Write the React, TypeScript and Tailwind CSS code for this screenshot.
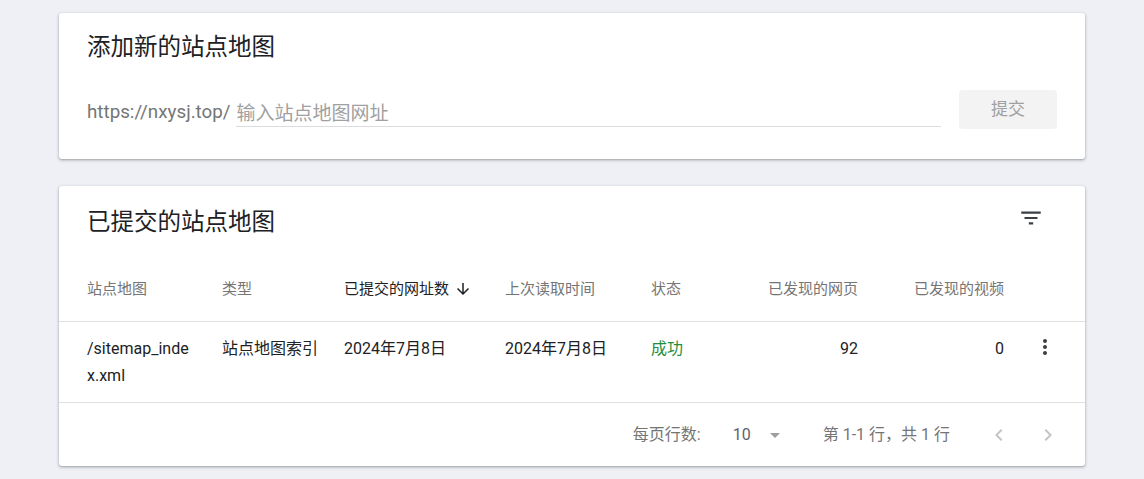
import React from 'react';

const font = { fontFamily: 'Roboto, "Noto Sans CJK SC", sans-serif' };

// Material-style icons drawn inline
const FilterIcon = () => (
  <svg viewBox="0 0 24 24" className="w-[26px] h-[26px] fill-[#3c4043]">
    <path d="M10 18h4v-2h-4v2zM3 6v2h18V6H3zm3 7h12v-2H6v2z" />
  </svg>
);

const ArrowDown = () => (
  <svg viewBox="0 0 24 24" className="w-[18px] h-[18px] fill-[#202124]">
    <path d="M20 12l-1.41-1.41L13 16.17V4h-2v12.17l-5.58-5.59L4 12l8 8 8-8z" />
  </svg>
);

const MoreVert = () => (
  <svg viewBox="0 0 24 24" className="w-[24px] h-[24px] fill-[#3c4043]">
    <path d="M12 8c1.1 0 2-.9 2-2s-.9-2-2-2-2 .9-2 2 .9 2 2 2zm0 2c-1.1 0-2 .9-2 2s.9 2 2 2 2-.9 2-2-.9-2-2-2zm0 6c-1.1 0-2 .9-2 2s.9 2 2 2 2-.9 2-2-.9-2-2-2z" />
  </svg>
);

const DropDown = () => (
  <svg viewBox="0 0 24 24" className="w-[24px] h-[24px] fill-[#9e9e9e]">
    <path d="M7 10l5 5 5-5z" />
  </svg>
);

const ChevronLeft = () => (
  <svg viewBox="0 0 24 24" className="w-[24px] h-[24px] fill-[#c4c4c4]">
    <path d="M15.41 7.41L14 6l-6 6 6 6 1.41-1.41L10.83 12z" />
  </svg>
);

const ChevronRight = () => (
  <svg viewBox="0 0 24 24" className="w-[24px] h-[24px] fill-[#c4c4c4]">
    <path d="M10 6L8.59 7.41 13.17 12l-4.58 4.59L10 18l6-6z" />
  </svg>
);

const cardClass =
  'bg-white rounded-[3px] shadow-[0_1px_2px_rgba(60,64,67,0.3),0_1px_3px_1px_rgba(60,64,67,0.15)]';

const cols = 'grid grid-cols-[135px_122px_161px_146px_107px_100px_146px_1fr] pl-[28px]';

function AddSitemap() {
  return (
    <div className={`${cardClass} h-[146px] pt-[18px] px-[28px]`}>
      <h2 className="text-[23.5px] leading-[32px] text-[#202124] font-normal">添加新的站点地图</h2>
      <div className="flex items-end h-[39px] mt-[27px]">
        <span className="text-[18.8px] leading-[24px] text-[#757575] mb-[5px]">https://nxysj.top/</span>
        <div className="flex-1 ml-[5px] mb-[2px] h-[25px] border-b border-[#dadce0]">
          <input
            className="w-full h-[24px] bg-transparent outline-none text-[19px] leading-[24px] text-[#202124] placeholder:text-[#a0a0a0] pl-[1px]"
            placeholder="输入站点地图网址"
          />
        </div>
        <button className="ml-[18px] w-[98px] h-[39px] rounded-[4px] bg-[#f3f3f3] text-[17px] text-[#a0a0a0]">
          提交
        </button>
      </div>
    </div>
  );
}

function SitemapTable() {
  return (
    <div className={`${cardClass} h-[280px] pt-[20px]`}>
      <div className="flex items-center justify-between h-[32px] pl-[28px] pr-[30px]">
        <h2 className="text-[23.5px] leading-[32px] text-[#202124] font-normal">已提交的站点地图</h2>
        <button className="w-[48px] h-[48px] -mt-[8px] flex items-center justify-center">
          <FilterIcon />
        </button>
      </div>

      {/* header */}
      <div className={`${cols} mt-[19px] h-[65px] items-center border-b border-[#e0e0e0] text-[15px] text-[#757575]`}>
        <div>站点地图</div>
        <div>类型</div>
        <div className="flex items-center gap-[5px] text-[#202124]">
          已提交的网址数
          <ArrowDown />
        </div>
        <div>上次读取时间</div>
        <div>状态</div>
        <div className="text-right">已发现的网页</div>
        <div className="text-right">已发现的视频</div>
        <div />
      </div>

      {/* row */}
      <div className={`${cols} h-[81px] pt-[13px] border-b border-[#e0e0e0] text-[16px] leading-[27px] text-[#202124] items-start`}>
        <div className="pr-[30px] break-all">/sitemap_index.xml</div>
        <div>站点地图索引</div>
        <div>2024年7月8日</div>
        <div>2024年7月8日</div>
        <div className="text-[#1e8e3e]">成功</div>
        <div className="text-right">92</div>
        <div className="text-right">0</div>
        <div className="flex justify-center">
          <MoreVert />
        </div>
      </div>

      {/* pagination */}
      <div className="flex items-center justify-end h-[63px] pr-[13px] text-[16px] text-[#757575]">
        <span>每页行数:</span>
        <span className="ml-[32px] text-[#5f6368]">10</span>
        <span className="ml-[12px]">
          <DropDown />
        </span>
        <span className="ml-[36px]">第 1-1 行，共 1 行</span>
        <button className="ml-[25px] w-[48px] h-[48px] flex items-center justify-center">
          <ChevronLeft />
        </button>
        <button className="ml-[1px] w-[48px] h-[48px] flex items-center justify-center">
          <ChevronRight />
        </button>
      </div>
    </div>
  );
}

export default function App() {
  return (
    <div className="min-h-screen bg-[#eef0f5] pt-[13px] px-[59px] pb-[13px]" style={font}>
      <div className="flex flex-col gap-[27px]">
        <AddSitemap />
        <SitemapTable />
      </div>
    </div>
  );
}
